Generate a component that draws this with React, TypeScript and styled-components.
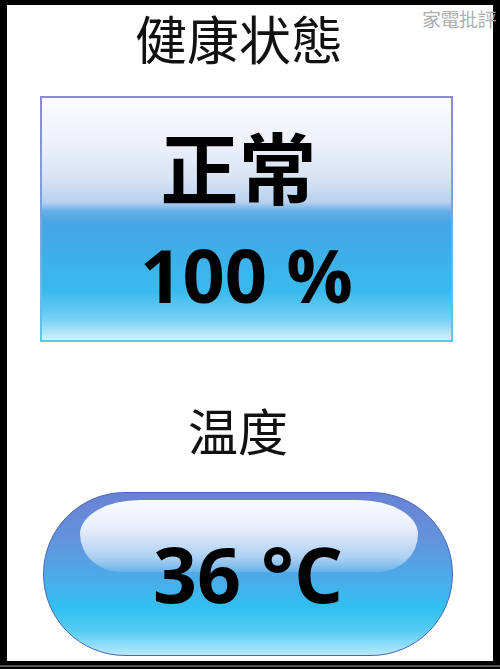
import React from 'react';
import styled, { createGlobalStyle } from 'styled-components';

const GlobalStyle = createGlobalStyle`
  html, body {
    margin: 0;
    padding: 0;
    background: #000;
  }
  body {
    width: 500px;
    height: 669px;
    font-family: "Noto Sans CJK TC", "Noto Sans CJK JP", sans-serif;
  }
`;

const Frame = styled.div`
  position: relative;
  box-sizing: border-box;
  width: 500px;
  height: 665px;
  border-style: solid;
  border-color: #000;
  border-width: 5px 7px 4px 7px;
  background: #fff;
  display: flex;
  flex-direction: column;
  align-items: flex-start;
`;

const BottomEdge = styled.div`
  height: 2px;
  width: 500px;
  background: #555;
`;

const Watermark = styled.div`
  position: absolute;
  top: 0;
  right: -3px;
  font-size: 19px;
  line-height: 28px;
  color: #aeaeae;
  letter-spacing: -0.5px;
`;

const Label = styled.div<{ $size: number; $left: number; $top: number }>`
  font-size: ${p => p.$size}px;
  line-height: ${p => Math.round(p.$size * 1.27)}px;
  color: #111;
  margin-left: ${p => p.$left}px;
  margin-top: ${p => p.$top}px;
  white-space: nowrap;
`;

const StatusBox = styled.div`
  box-sizing: border-box;
  margin-top: 25px;
  margin-left: 33px;
  width: 413px;
  height: 246px;
  border: 2px solid;
  border-image: linear-gradient(#8a8ad2, #7aa6e0 50%, #5cc6ee) 1;
  background: linear-gradient(
    to bottom,
    #fbfbff 0%,
    #eef1fb 18%,
    #d6e2f4 34%,
    #b6d1ef 43%,
    #62ade6 47%,
    #46a5e4 52%,
    #3eb0e8 66%,
    #3abaec 80%,
    #72d0f3 91%,
    #d2f1fb 100%
  );
  display: flex;
  flex-direction: column;
  align-items: center;
`;

const StatusText = styled.div`
  font-size: 78px;
  line-height: 84px;
  font-weight: 700;
  color: #000;
  margin-top: 25px;
  margin-left: -16px;
`;

const Value = styled.div<{ $size: number; $top: number }>`
  font-family: "Open Sans", "Noto Sans", sans-serif;
  font-size: ${p => p.$size}px;
  line-height: ${p => p.$size + 8}px;
  font-weight: 700;
  color: #000;
  margin-top: ${p => p.$top}px;
  position: relative;
  white-space: nowrap;
`;

const Pill = styled.div`
  position: relative;
  box-sizing: border-box;
  margin-top: 31px;
  margin-left: 36px;
  width: 410px;
  height: 164px;
  border-radius: 82px;
  border: 1.5px solid #4a64bb;
  background: linear-gradient(
    to bottom,
    #6a82d4 0%,
    #6294dc 30%,
    #48aee9 55%,
    #30c0f1 72%,
    #5acdf4 86%,
    #b8eafa 100%
  );
  display: flex;
  justify-content: center;
  align-items: flex-start;
  overflow: hidden;
`;

const Gloss = styled.div`
  position: absolute;
  left: 36px;
  right: 34px;
  top: 7px;
  height: 72px;
  border-radius: 60px 60px 40px 40px / 34px 34px 38px 38px;
  background: linear-gradient(
    to bottom,
    rgba(255, 255, 255, 0.96) 0%,
    rgba(245, 248, 255, 0.9) 40%,
    rgba(200, 225, 248, 0.75) 80%,
    rgba(160, 210, 245, 0.3) 100%
  );
`;

export default function App() {
  return (
    <>
      <GlobalStyle />
      <Frame>
        <Watermark>家電批評</Watermark>
        <Label $size={52} $left={128} $top={0}>健康状態</Label>
        <StatusBox>
          <StatusText>正常</StatusText>
          <Value $size={74} $top={27}>100 %</Value>
        </StatusBox>
        <Label $size={50} $left={181} $top={55}>温度</Label>
        <Pill>
          <Gloss />
          <Value $size={77} $top={38}>36 °C</Value>
        </Pill>
      </Frame>
      <BottomEdge />
    </>
  );
}
